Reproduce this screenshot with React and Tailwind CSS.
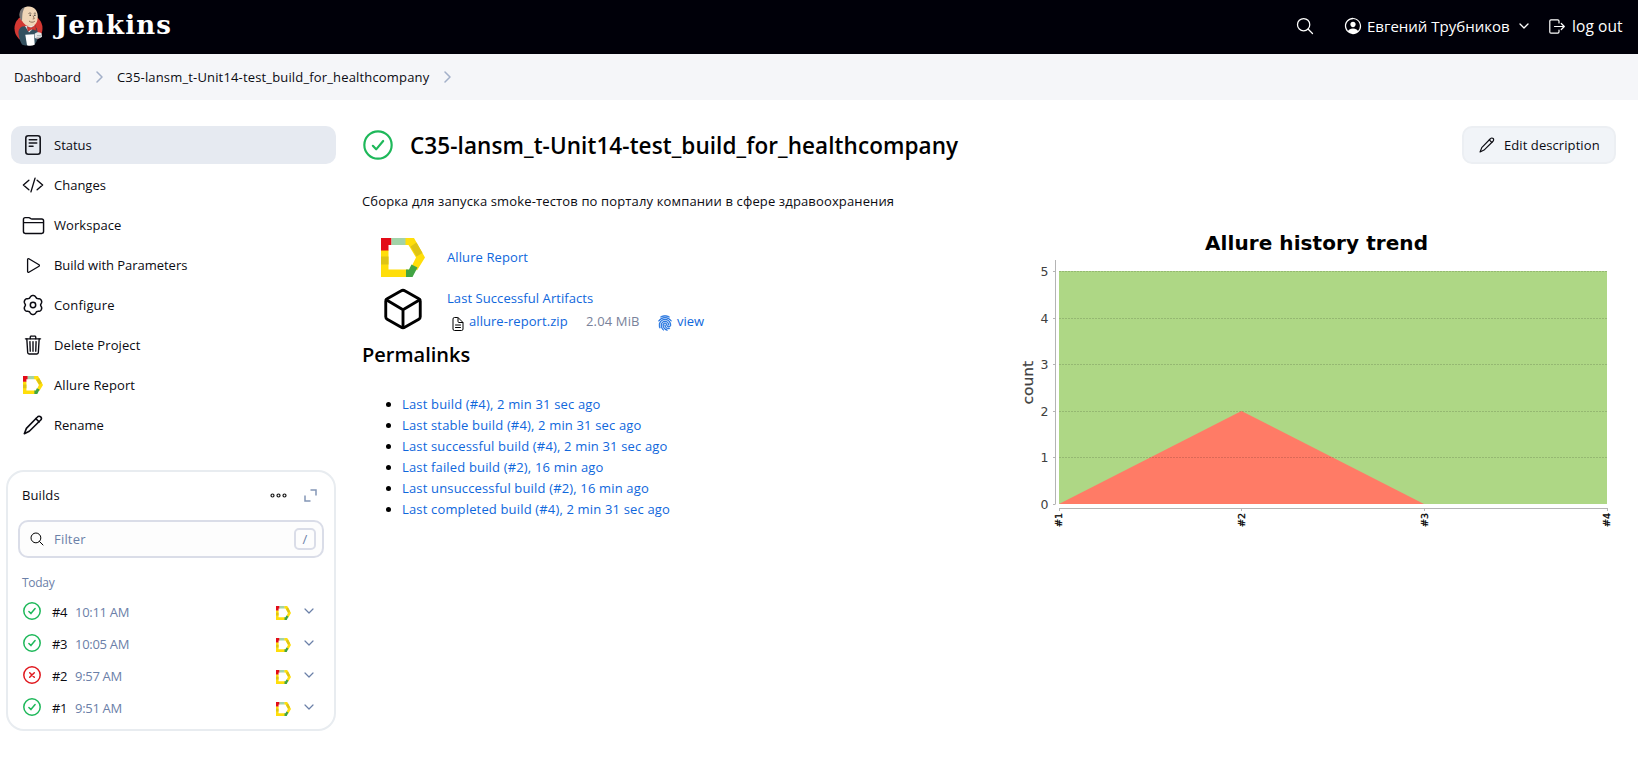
import React from 'react';
import {
  IoCodeSlashOutline,
  IoFolderOutline,
  IoPlayOutline,
  IoTrashOutline,
  IoCubeOutline,
  IoDocumentTextOutline,
  IoFingerPrintOutline,
  IoPersonCircleOutline,
  IoSearchOutline,
} from 'react-icons/io5';

function AllureIcon({ className }) {
  return (
    <svg className={className} viewBox="0 0 44 39" preserveAspectRatio="none">
      <path d="M0 12h7.5v19.5H27l4 7.5H0z" fill="#ffde0a" />
      <path d="M24 0h9l11 19.5-8 13-5-5 4-8L27.500 7H24z" fill="#ffde0a" />
      <path d="M0 0h10.500v7H7.500v5.500H0z" fill="#e30b17" />
      <path d="M10.500 0H24.500v7h-14z" fill="#a2d3a8" />
      <path d="M35.500 4.500l6 10.500-6 3.500-6-10z" fill="#dfc414" />
      <path d="M0 18.500h7.500v8H0z" fill="#dfc414" />
      <path d="M25 39v-7.500h3l2.500-5 6 3-5 9.500z" fill="#41a443" />
    </svg>
  );
}

function CheckCircle({ className, sw = 1.5 }) {
  return (
    <svg className={className} viewBox="0 0 18 18" fill="none" stroke="#1eb85a" strokeWidth={sw} strokeLinecap="round" strokeLinejoin="round">
      <circle cx="9" cy="9" r="8.200" />
      <path d="M5.900 9.500l2 2.100 4.200-5" />
    </svg>
  );
}

function CrossCircle({ className }) {
  return (
    <svg className={className} viewBox="0 0 18 18" fill="none" stroke="#e0191f" strokeWidth="1.500" strokeLinecap="round">
      <circle cx="9" cy="9" r="8.200" />
      <path d="M6.700 6.700l4.600 4.600M11.300 6.700l-4.600 4.600" />
    </svg>
  );
}

function Pencil({ className, sw = 1.6 }) {
  return (
    <svg className={className} viewBox="0 0 20 20" fill="none" stroke="currentColor" strokeWidth={sw} strokeLinejoin="round" strokeLinecap="round">
      <path d="M14.200 2.200c1.100-1.200 2.600-1.200 3.500-.3.900.9.900 2.300-.2 3.400L6.300 16.300 1.300 18.700 3.400 13.400z" />
      <path d="M12.900 3.700l3.200 3.200" />
    </svg>
  );
}

function StatusIcon({ className }) {
  return (
    <svg className={className} viewBox="0 0 22 22" fill="none" stroke="#15161d" strokeWidth="1.600" strokeLinecap="round" strokeLinejoin="round">
      <rect x="3.800" y="1.800" width="14.400" height="18.400" rx="2.400" />
      <path d="M7.300 5.800h7.400M7.300 9h7.400M7.300 12.200h3.700" />
    </svg>
  );
}

// Six-lobed outline sampled from a cosine-modulated circle.
const gearPath =
  'M' +
  Array.from({ length: 120 }, (_, i) => {
    const a = (i / 120) * Math.PI * 2;
    const r = 8.7 + 0.95 * Math.cos(6 * a) - 0.15 * Math.cos(12 * a);
    return (11 + r * Math.sin(a)).toFixed(2) + ' ' + (11 - r * Math.cos(a)).toFixed(2);
  }).join('L') +
  'Z';

function GearIcon({ className }) {
  return (
    <svg className={className} viewBox="0 0 22 22" fill="none" stroke="currentColor" strokeWidth="1.500" strokeLinejoin="round">
      <path d={gearPath} />
      <circle cx="11" cy="11" r="2.700" />
    </svg>
  );
}

function Chevron({ className, d = 'M1 1l4 4 4-4', box = '0 0 10 6', sw = 1.3 }) {
  return (
    <svg className={className} viewBox={box} fill="none" stroke="currentColor" strokeWidth={sw} strokeLinecap="round" strokeLinejoin="round">
      <path d={d} />
    </svg>
  );
}

function Crumb() {
  return <Chevron className="w-[7px] h-3 text-[#a3b0c9]" box="0 0 7 12" d="M1 1l5 5-5 5" sw={1.5} />;
}

function JenkinsLogo() {
  return (
    <svg className="w-[30px] h-[41px]" viewBox="0 0 30 41">
      <ellipse cx="14.500" cy="22.500" rx="14" ry="14" fill="#d33833" />
      <path d="M8 20.500c-2.500 1.500-4 4-3.500 7 .5 4.500 1.800 8.500 3.500 11 2 1 4 1.200 5 1l8-1.500c2-3 3.500-6 3.200-10l-1.500-6-6-2z" fill="#33505f" />
      <path d="M11 20l4 6.500 6-5.500-1-2.500z" fill="#eceeee" />
      <path d="M5.800 8C6.800 3 10.500.5 15 .6c5 .2 8.300 3.600 8.700 8.600.3 5-1 9.300-5.200 10.800-5 .8-8.700-1.500-10.700-5.500C6.200 13 5.500 11 5.800 8z" fill="#f0d6b7" />
      <path d="M5.800 10C4.800 6 7 2 11 1.300 9 4 8.500 7 8.300 9.500L8 15C6.500 13.500 5.700 12 5.800 10z" fill="#7b7877" />
      <path d="M14.500 7.500c.8-.6 2-.6 2.800 0M19.800 7.500c.7-.5 1.600-.5 2.200 0" stroke="#5a4a3f" strokeWidth=".8" fill="none" />
      <circle cx="16.200" cy="9.300" r=".75" fill="#222" />
      <circle cx="20.900" cy="9.300" r=".75" fill="#222" />
      <path d="M19 9.500l1.300 3.200-1.600.3M15 15c2 1.700 4 1.500 5.800.3" stroke="#7d5a45" strokeWidth=".8" fill="none" />
      <path d="M13 20.500l4 1.200 4.500-2.200.8 5-4.600-1.200-3.700 2z" fill="#d33833" />
      <path d="M13 20.500l4 1.200 4.500-2.200.8 5-4.600-1.200-3.700 2z" fill="none" stroke="#8e211d" strokeWidth=".4" />
      <path d="M11.300 28.700l8.700-.4.700 10.400c-2.700 1.400-5.200 1.400-7.700.6z" fill="#fff" />
      <path d="M20.500 28c1.700-2 4.700-2.200 7-.8l.5 3.600c-2 2-4.600 2.200-7.200 1.200z" fill="#e4e6e6" />
      <path d="M23 29.500h4M22.500 31.500l4.500-.5" stroke="#8f999e" strokeWidth=".6" />
    </svg>
  );
}

const nav = [
  { label: 'Status', icon: <StatusIcon className="w-[22px] h-[22px]" />, cls: '', active: true },
  { label: 'Changes', icon: <IoCodeSlashOutline className="w-[22px] h-[22px]" />, cls: '' },
  { label: 'Workspace', icon: <IoFolderOutline className="w-[23px] h-[23px]" />, cls: 'tracking-[0.05px]' },
  { label: 'Build with Parameters', icon: <IoPlayOutline className="w-[21px] h-[21px]" />, cls: 'tracking-[-0.03px]' },
  { label: 'Configure', icon: <GearIcon className="w-[22px] h-[22px]" />, cls: 'tracking-[0.15px]' },
  { label: 'Delete Project', icon: <IoTrashOutline className="w-[22px] h-[22px]" />, cls: 'tracking-[0.1px]' },
  { label: 'Allure Report', icon: <AllureIcon className="w-[20px] h-[18px]" />, cls: 'tracking-[0.1px]' },
  { label: 'Rename', icon: <Pencil className="w-[20px] h-[20px]" />, cls: '' },
];

const builds = [
  { n: '#4', t: '10:11 AM', ok: true },
  { n: '#3', t: '10:05 AM', ok: true },
  { n: '#2', t: '9:57 AM', ok: false },
  { n: '#1', t: '9:51 AM', ok: true },
];

const links = [
  'Last build (#4), 2 min 31 sec ago',
  'Last stable build (#4), 2 min 31 sec ago',
  'Last successful build (#4), 2 min 31 sec ago',
  'Last failed build (#2), 16 min ago',
  'Last unsuccessful build (#2), 16 min ago',
  'Last completed build (#4), 2 min 31 sec ago',
];

function Header() {
  return (
    <header className="h-[54px] bg-[#000009] text-white flex items-start">
      <div className="pl-[14px] pt-[6px]"><JenkinsLogo /></div>
      <div className="pl-[11px] pt-[9px] text-[26px] leading-8 font-bold font-['DejaVu_Serif',serif] tracking-[1.1px]">Jenkins</div>
      <div className="ml-auto h-[52px] flex items-center pr-[15px]">
        <IoSearchOutline className="w-[20px] h-[20px] mr-[28px]" />
        <IoPersonCircleOutline className="w-[20px] h-[20px] mr-[4px]" />
        <span className="text-[15px] w-[142px] whitespace-nowrap">Евгений Трубников</span>
        <Chevron className="w-[10px] h-[6px] ml-[10px] mr-5" />
        <svg className="w-[16px] h-[15px] mr-[7px]" viewBox="0 0 16 15" fill="none" stroke="currentColor" strokeWidth="1.200" strokeLinejoin="round" strokeLinecap="round">
          <path d="M10 4V2.200C10 1.200 9.500.8 8.700.8H2C1.200.8.800 1.200.8 2v11c0 .8.400 1.200 1.200 1.200h6.700c.8 0 1.300-.4 1.300-1.400V11M5.500 7.500h9.700M12.300 4.500l3 3-3 3" />
        </svg>
        <span className="text-[15.5px] w-[51px] whitespace-nowrap tracking-[0.1px]">log out</span>
      </div>
    </header>
  );
}

function Builds() {
  return (
    <section className="mt-[26px] -ml-[5px] w-[330px] h-[261px] border-2 border-[#e8ecf0] rounded-[18px] px-[10px]">
      <div className="h-[48px] flex items-center pl-1 pb-[2px]">
        <h2 className="font-normal tracking-[0.1px]">Builds</h2>
        <svg className="ml-auto w-[17px] h-[5px]" viewBox="0 0 17 5" fill="none" stroke="#111" strokeWidth="1.200">
          <circle cx="2.500" cy="2.500" r="1.500" /><circle cx="8.500" cy="2.500" r="1.500" /><circle cx="14.500" cy="2.500" r="1.500" />
        </svg>
        <svg className="ml-[17px] mr-[7px] w-[13px] h-[13px]" viewBox="0 0 13 13" fill="none" stroke="#8496b6" strokeWidth="1.500">
          <path d="M6.500 1H12v5.500M1 6.500V12h5.500" />
        </svg>
      </div>
      <div className="h-[38px] w-[306px] border-2 border-[#dadde8] rounded-[10px] bg-[#fdfdfd] flex items-center pl-[9px] pr-[6px]">
        <IoSearchOutline className="w-[16px] h-[16px] text-black" />
        <span className="ml-[9px] text-[#6b80a8] tracking-[0.2px]">Filter</span>
        <span className="ml-auto w-[22px] h-[22px] border-2 border-[#dadde8] rounded-[5px] flex items-center justify-center text-[#6b80a8] leading-none">/</span>
      </div>
      <div className="pl-1 pt-[16px] h-[37px] text-[12px] leading-[18px] tracking-[-0.3px] text-[#6b80a8]">Today</div>
      {builds.map((b) => (
        <div key={b.n} className="h-8 flex items-center pl-[5px]">
          {b.ok ? <CheckCircle className="w-[18px] h-[18px]" /> : <CrossCircle className="w-[18px] h-[18px]" />}
          <span className="ml-[11px] w-[23px] tracking-[-0.4px] pt-[2px]">{b.n}</span>
          <span className="tracking-[-0.3px] text-[#6b80a8] pt-[2px]">{b.t}</span>
          <AllureIcon className="ml-auto mt-[3px] w-[15px] h-[14px]" />
          <Chevron className="ml-[13px] mr-[10px] w-[10px] h-[6px] text-[#6b80a8]" sw={1.2} />
        </div>
      ))}
    </section>
  );
}

function Chart() {
  const ys = [504, 457.5, 411, 364.5, 318, 271.5];
  const xs = [1059, 1241.5, 1424.5, 1607];
  return (
    <svg className="w-[620px] h-[310px] shrink-0" viewBox="1016 222 620 310" fontFamily="DejaVu Sans, sans-serif">
      <text x="1316.500" y="249.500" textAnchor="middle" fontSize="20" fontWeight="700" textLength="223">Allure history trend</text>
      <rect x="1059" y="271" width="548" height="233" fill="#aed785" />
      <path d="M1059 504L1241.500 411 1424 504z" fill="#ff7b66" />
      {ys.slice(1).map((y) => (
        <line key={y} x1="1059" x2="1607" y1={Math.floor(y) + 0.5} y2={Math.floor(y) + 0.5} stroke="#000" strokeOpacity=".14" strokeDasharray="2 1" />
      ))}
      <path d="M1055.500 260V504.500M1059 508.500H1608" stroke="#b4b4b4" fill="none" />
      {ys.map((y, i) => (
        <g key={y}>
          <line x1="1053" x2="1055" y1={Math.floor(y) + 0.5} y2={Math.floor(y) + 0.5} stroke="#b4b4b4" />
          <text x="1048.500" y={y + 4.5} textAnchor="end" fontSize="12.500" fill="#404040">{i}</text>
        </g>
      ))}
      {xs.map((x, i) => (
        <g key={x}>
          <line x1={Math.floor(x) + 0.5} x2={Math.floor(x) + 0.5} y1="509" y2="511" stroke="#b4b4b4" />
          <text transform={'translate(' + (x + 3.2) + ' 527) rotate(-90)'} fontSize="9.500" fontWeight="400" stroke="#000" strokeWidth=".3" textLength="14">{'#' + (i + 1)}</text>
        </g>
      ))}
      <text transform="translate(1033 404.500) rotate(-90)" fontSize="14" fill="#404040" stroke="#404040" strokeWidth=".2" textLength="43.500" lengthAdjust="spacingAndGlyphs">count</text>
    </svg>
  );
}

export default function App() {
  return (
    <div className="w-[1638px] h-[767px] overflow-hidden bg-white text-[#0b0b12] font-['Open_Sans','Noto_Sans',sans-serif] text-[13px] leading-5">
      <Header />
      <nav className="h-[46px] bg-[#f5f6f9] flex items-center pl-[14px]">
        <span className="w-[82px] tracking-[-0.03px]">Dashboard</span>
        <Crumb />
        <span className="ml-[14px] w-[327px] tracking-[0.16px] whitespace-nowrap">C35-lansm_t-Unit14-test_build_for_healthcompany</span>
        <Crumb />
      </nav>
      <div className="flex pt-[26px] pl-[11px]">
        <aside className="w-[325px] shrink-0">
          <div className="flex flex-col gap-[2px]">
            {nav.map((n) => (
              <div key={n.label} className={'h-[38px] rounded-[10px] flex items-center pl-[10px] ' + n.cls + (n.active ? ' bg-[#e6eaf1]' : '')}>
                <span className="w-6 mr-[9px] flex items-center justify-center">{n.icon}</span>
                {n.label}
              </div>
            ))}
          </div>
          <Builds />
        </aside>
        <main className="ml-[26px] w-[1276px]">
          <div className="flex items-center h-[38px]">
            <CheckCircle className="ml-[1px] w-[30px] h-[30px]" sw={1.3} />
            <h1 className="ml-[17px] pt-[2px] text-[22.5px] leading-8 font-semibold text-black tracking-[0.08px]">C35-lansm_t-Unit14-test_build_for_healthcompany</h1>
            <button className="ml-auto mr-[22px] w-[154px] h-[38px] rounded-[10px] bg-[#f1f4f8] border-2 border-[#eceff3] flex items-center pl-[15px] tracking-[0.08px]">
              <Pencil className="w-[16px] h-[16px] mr-[9px]" sw={1.4} />
              Edit description
            </button>
          </div>
          <div className="flex justify-between">
            <div>
              <p className="mt-[27px] tracking-[0.14px] whitespace-nowrap">Сборка для запуска smoke-тестов по порталу компании в сфере здравоохранения</p>
              <div className="mt-[25px] ml-[19px] flex items-center h-[42px] text-[#0f67dc]">
                <AllureIcon className="w-[44px] h-[39px] mt-[1px]" />
                <span className="ml-[22px] tracking-[0.1px]">Allure Report</span>
              </div>
              <div className="ml-[18px] flex h-[53px] text-[#0f67dc]">
                <IoCubeOutline className="w-[46px] h-[46px] mt-[8px] text-black" />
                <div className="ml-[21px] pt-[9px]">
                  <div className="leading-[22px] tracking-[0.07px]">Last Successful Artifacts</div>
                  <div className="flex items-center leading-6 whitespace-nowrap">
                    <IoDocumentTextOutline className="w-4 h-4 ml-[3px] mt-[5px] text-black" />
                    <span className="ml-[3px] w-[117px] tracking-[0.06px]">allure-report.zip</span>
                    <span className="w-[71px] text-[#79829a] tracking-[0.15px]">2.04 MiB</span>
                    <IoFingerPrintOutline className="w-4 h-4 mt-[4px]" stroke="currentColor" strokeWidth="14" />
                    <span className="ml-[4px]">view</span>
                  </div>
                </div>
              </div>
              <h2 className="mt-[10px] text-[20px] leading-7 font-semibold text-black">Permalinks</h2>
              <ul className="mt-[25px] list-disc pl-10 text-black">
                {links.map((l) => (
                  <li key={l} className="leading-[21px] tracking-[0.16px]"><a className="text-[#0f67dc]">{l}</a></li>
                ))}
              </ul>
            </div>
            <div className="pt-[58px] pr-[2px]"><Chart /></div>
          </div>
        </main>
      </div>
    </div>
  );
}
